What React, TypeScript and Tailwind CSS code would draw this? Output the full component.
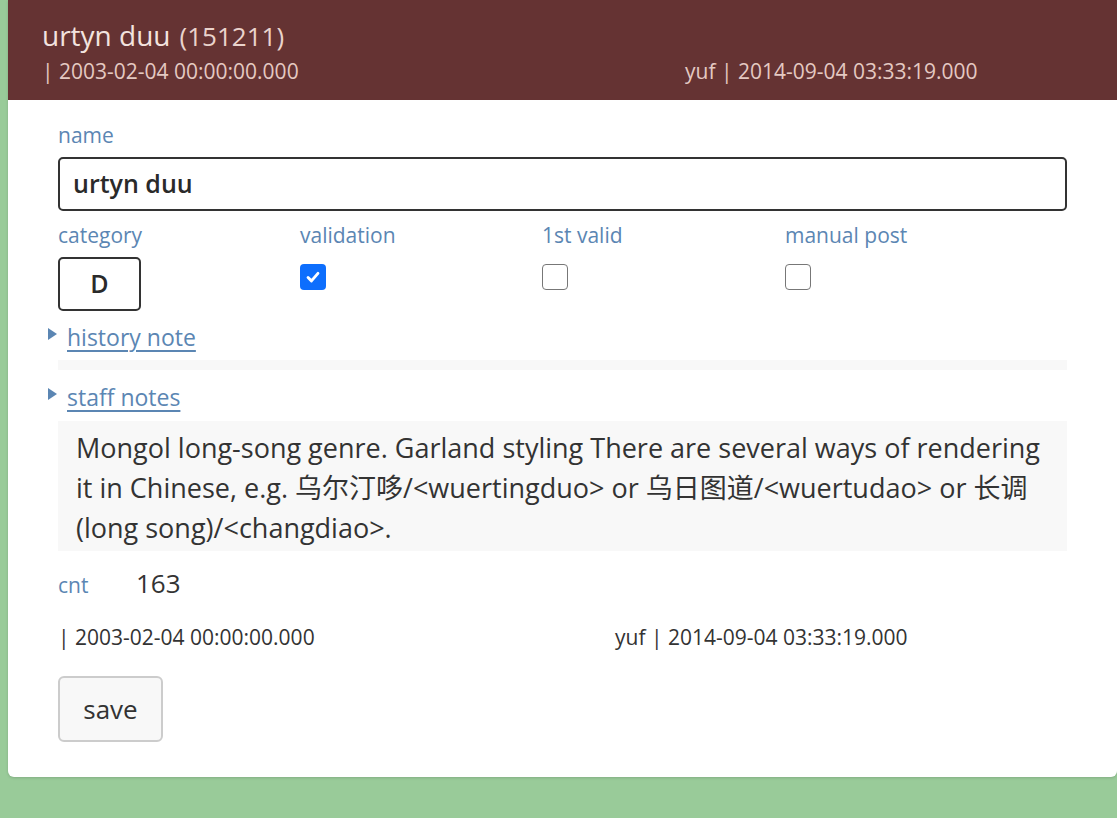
import React from "react";

function Triangle() {
  return (
    <span className="inline-block w-0 h-0 border-y-[6px] border-y-transparent border-l-[9px] border-l-[#5b86b3] mr-[10px] translate-y-[-3px]" />
  );
}

function Check({ checked }: { checked?: boolean }) {
  if (checked) {
    return (
      <span className="flex w-[26px] h-[26px] rounded-[4px] bg-[#0d6efd] items-center justify-center">
        <svg width="18" height="18" viewBox="0 0 20 20" fill="none">
          <path d="M4.5 10.5l3.8 3.8L15.5 6" stroke="white" strokeWidth="3.2" strokeLinecap="round" strokeLinejoin="round" />
        </svg>
      </span>
    );
  }
  return <span className="block w-[26px] h-[26px] rounded-[4px] border border-[#777] bg-white" />;
}

const label = "text-[21px] text-[#5b86b3] leading-[30px] font-medium";

export default function App() {
  const font = { fontFamily: '"Open Sans", "Noto Sans CJK SC", sans-serif' };
  return (
    <div className="min-h-[818px] bg-[#99cb99] pl-[8px]" style={font}>
      <div className="bg-white rounded-b-[6px] shadow-[0_1px_3px_rgba(0,0,0,0.15)] h-[777px] flex flex-col">
        <div className="bg-[#653333] h-[100px] pl-[34px] pt-[15px]">
          <div className="flex items-baseline text-[#f3e3df] leading-[40px]">
            <span className="text-[28px]">urtyn duu</span>
            <span className="text-[26px] ml-[9px] text-[#ead3cc]">(151211)</span>
          </div>
          <div className="flex text-[21px] text-[#e4c9c2] leading-[30px]">
            <span className="w-[643px]">| 2003-02-04 00:00:00.000</span>
            <span>yuf | 2014-09-04 03:33:19.000</span>
          </div>
        </div>
        <div className="px-[50px] pt-[20px] flex flex-col">
          <div className={label}>name</div>
          <div className="h-[54px] border-2 border-[#333] rounded-[5px] flex items-center px-[13px] text-[25px] font-semibold text-[#2a2a2a] mt-[7px]">
            urtyn duu
          </div>
          <div className="flex mt-[9px]">
            <div className="w-[242px]">
              <div className={label}>category</div>
              <div className="mt-[7px] w-[83px] h-[54px] border-2 border-[#333] rounded-[5px] flex items-center justify-center text-[25px] font-semibold text-[#2a2a2a]">
                D
              </div>
            </div>
            <div className="w-[242px]">
              <div className={label}>validation</div>
              <div className="mt-[14px]"><Check checked /></div>
            </div>
            <div className="w-[243px]">
              <div className={label}>1st valid</div>
              <div className="mt-[14px]"><Check /></div>
            </div>
            <div>
              <div className={label}>manual post</div>
              <div className="mt-[14px]"><Check /></div>
            </div>
          </div>
          <div className="ml-[-10px] mt-[10px] flex items-center text-[23px] text-[#5b86b3] leading-[32px] font-medium">
            <Triangle />
            <span className="underline underline-offset-[4px] decoration-[2px]">history note</span>
          </div>
          <div className="h-[10px] bg-[#f8f8f8] mt-[7px]" />
          <div className="ml-[-10px] mt-[11px] flex items-center text-[23px] text-[#5b86b3] leading-[32px] font-medium">
            <Triangle />
            <span className="underline underline-offset-[4px] decoration-[2px]">staff notes</span>
          </div>
          <div className="bg-[#f8f8f8] mt-[8px] pl-[18px] pr-[6px] pt-[7px] pb-[3px] text-[27px] leading-[40px] text-[#333]">
            Mongol long-song genre. Garland styling There are several ways of rendering it in Chinese, e.g. 乌尔汀哆/&lt;wuertingduo&gt; or 乌日图道/&lt;wuertudao&gt; or 长调 (long song)/&lt;changdiao&gt;.
          </div>
          <div className="flex items-baseline mt-[15px] leading-[34px]">
            <span className="w-[78px] text-[21px] text-[#5b86b3] font-medium">cnt</span>
            <span className="text-[26px] text-[#333]">163</span>
          </div>
          <div className="flex mt-[20px] text-[21px] text-[#333] leading-[30px]">
            <span className="w-[557px]">| 2003-02-04 00:00:00.000</span>
            <span>yuf | 2014-09-04 03:33:19.000</span>
          </div>
          <div className="mt-[24px]">
            <button className="w-[105px] h-[66px] border-2 border-[#ccc] rounded-[6px] bg-[#f8f8f8] text-[26px] text-[#333]">
              save
            </button>
          </div>
        </div>
      </div>
    </div>
  );
}
